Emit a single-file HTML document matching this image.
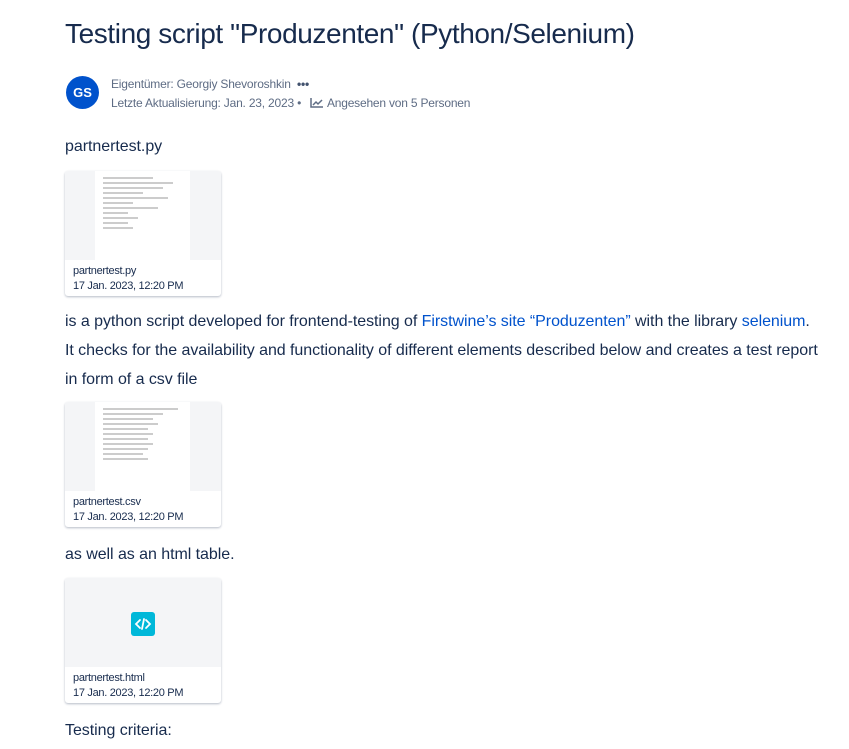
<!DOCTYPE html>
<html><head><meta charset="utf-8"><style>
body{margin:0;width:849px;height:749px;background:#fff;font-family:"Liberation Sans",sans-serif;color:#172b4d;position:relative;overflow:hidden}
.a{position:absolute;white-space:nowrap}
h1{position:absolute;left:65px;top:18px;margin:0;font-weight:400;font-size:28px;color:#172b4d;letter-spacing:-0.4px}
.av{position:absolute;left:66px;top:76px;width:33px;height:33px;border-radius:50%;background:#0052cc;color:#fff;font-size:13px;font-weight:700;text-align:center;line-height:33px}
.meta{font-size:12px;color:#5e6c84;letter-spacing:-0.2px}
.p{font-size:16px;color:#172b4d;letter-spacing:-0.05px}
.card{position:absolute;left:65px;width:156px;height:125px;border-radius:3px;box-shadow:0 1px 2px rgba(9,30,66,.3);overflow:hidden;background:#fff}
.pv{height:89px;background:#f4f5f7;position:relative}
.doc{position:absolute;left:30px;top:0;width:95px;height:89px;background:#fff}
.ln{height:2px;background:#ccc;margin:3px 8px;}
.cn{position:absolute;left:8px;top:93px;font-size:11px;color:#172b4d;line-height:15px;letter-spacing:-0.3px}
a{color:#0052cc;text-decoration:none}
</style></head><body>
<h1>Testing script "Produzenten" (Python/Selenium)</h1>
<div class="av">GS</div>
<div class="a meta" style="left:111px;top:77px">Eigentümer: Georgiy Shevoroshkin &nbsp;<b style="color:#42526e">•••</b></div>
<div class="a meta" style="left:111px;top:96px">Letzte Aktualisierung: Jan. 23, 2023 • &nbsp;
<svg width="14" height="10" viewBox="0 0 14 10" style="vertical-align:-1px"><path d="M1 0v9h12M3 7l3-3 2 2 4-4" stroke="#5e6c84" stroke-width="1.5" fill="none"/></svg> Angesehen von 5 Personen</div>
<div class="a p" style="left:65px;top:138px">partnertest.py</div>
<div class="card" style="top:171px"><div class="pv"><div class="doc" style="padding-top:3px">
<div class="ln" style="width:50px"></div><div class="ln" style="width:70px"></div><div class="ln" style="width:60px"></div><div class="ln" style="width:40px"></div><div class="ln" style="width:65px"></div><div class="ln" style="width:30px"></div><div class="ln" style="width:55px"></div><div class="ln" style="width:25px"></div><div class="ln" style="width:35px"></div><div class="ln" style="width:25px"></div><div class="ln" style="width:30px"></div>
</div></div><div class="cn">partnertest.py<br>17 Jan. 2023, 12:20 PM</div></div>
<div class="a p" style="left:65px;top:313px">is a python script developed for frontend-testing of <a>Firstwine’s site “Produzenten”</a> with the library <a>selenium</a>.</div>
<div class="a p" style="left:65px;top:342px">It checks for the availability and functionality of different elements described below and creates a test report</div>
<div class="a p" style="left:65px;top:371px">in form of a csv file</div>
<div class="card" style="top:402px"><div class="pv"><div class="doc" style="padding-top:3px">
<div class="ln" style="width:75px"></div><div class="ln" style="width:60px"></div><div class="ln" style="width:50px"></div><div class="ln" style="width:55px"></div><div class="ln" style="width:45px"></div><div class="ln" style="width:50px"></div><div class="ln" style="width:45px"></div><div class="ln" style="width:50px"></div><div class="ln" style="width:45px"></div><div class="ln" style="width:40px"></div><div class="ln" style="width:45px"></div>
</div></div><div class="cn">partnertest.csv<br>17 Jan. 2023, 12:20 PM</div></div>
<div class="a p" style="left:65px;top:546px">as well as an html table.</div>
<div class="card" style="top:578px"><div class="pv">
<div style="position:absolute;left:66px;top:34px;width:24px;height:24px;border-radius:3px;background:#00b8d9">
<svg width="24" height="24" viewBox="0 0 24 24"><path d="M9 8l-4 4 4 4M15 8l4 4-4 4M13 7l-2 10" stroke="#fff" stroke-width="1.8" fill="none" stroke-linecap="round"/></svg></div>
</div><div class="cn">partnertest.html<br>17 Jan. 2023, 12:20 PM</div></div>
<div class="a p" style="left:65px;top:722px">Testing criteria:</div>
</body></html>
